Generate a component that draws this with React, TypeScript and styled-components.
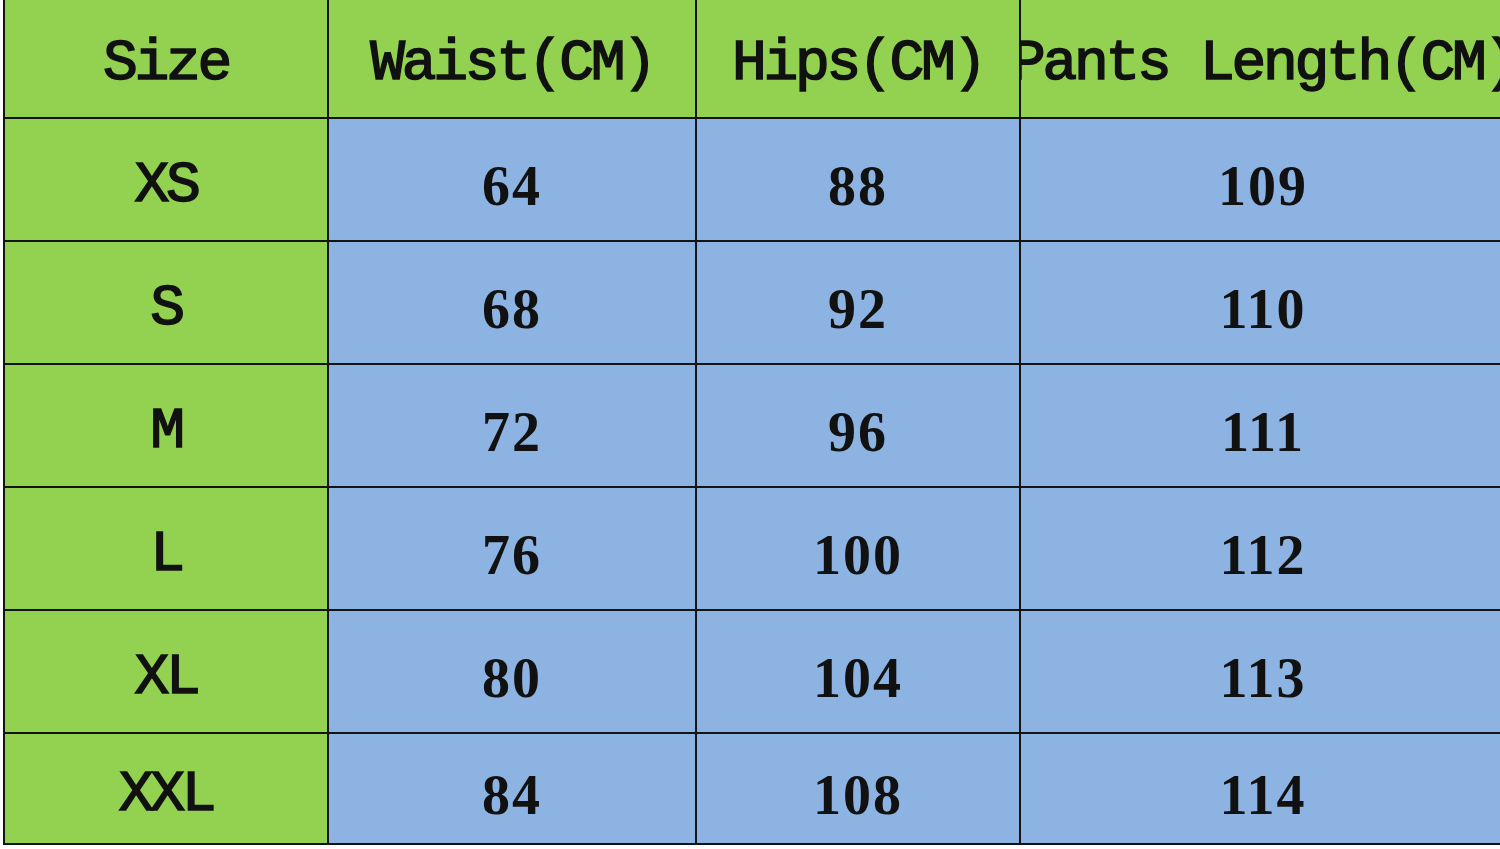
import React from 'react';
import styled, { createGlobalStyle } from 'styled-components';

const GlobalStyle = createGlobalStyle`
    html, body {
        margin: 0;
        padding: 0;
        background: #ffffff;
        overflow: hidden;
    }
`

const headers = ['Size', 'Waist(CM)', 'Hips(CM)', 'Pants Length(CM)']

const rows = [
    ['XS', '64', '88', '109'],
    ['S', '68', '92', '110'],
    ['M', '72', '96', '111'],
    ['L', '76', '100', '112'],
    ['XL', '80', '104', '113'],
    ['XXL', '84', '108', '114'],
]

const SizeChart = () => {
    return (
        <Page>
            <GlobalStyle />
            <Grid>
                {headers.map((title) => (
                    <Cell key={title} tone="green" head>
                        {title}
                    </Cell>
                ))}
                {rows.map((row) =>
                    row.map((value, index) => (
                        <Cell
                            key={row[0] + index}
                            tone={index === 0 ? 'green' : 'blue'}
                            numeric={index !== 0}
                        >
                            {value}
                        </Cell>
                    ))
                )}
            </Grid>
        </Page>
    )
}

// CSS styles
const Page = styled.div`
    width: 1500px;
    height: 849px;
    padding-left: 3px;
    box-sizing: border-box;
    overflow: hidden;
`

const Grid = styled.div`
    display: grid;
    grid-template-columns: 322px 366px 322px 484px;
    grid-template-rows: 117px repeat(5, 121px) 109px;
    gap: 2px;
    padding: 0 0 2px 2px;
    width: max-content;
    background: #141414;
`

const Cell = styled.div<{ tone: 'green' | 'blue'; head?: boolean; numeric?: boolean }>`
    display: flex;
    align-items: center;
    justify-content: center;
    overflow: hidden;
    white-space: pre;
    padding-top: ${(p) => (p.head ? '10px' : '12px')};
    box-sizing: border-box;
    background: ${(p) => (p.tone === 'green' ? '#93d251' : '#8db3e2')};
    color: #111111;
    font-family: ${(p) =>
        p.numeric
            ? '"Liberation Serif", "DejaVu Serif", serif'
            : '"Liberation Mono", "DejaVu Sans Mono", monospace'};
    font-weight: ${(p) => (p.numeric ? 700 : 400)};
    -webkit-text-stroke: ${(p) => (p.numeric ? '0' : '1.6px')} #111111;
    font-size: ${(p) => (p.numeric ? '56px' : '58px')};
    letter-spacing: ${(p) => (p.numeric ? '2px' : '-3.3px')};
    line-height: 1;
`

export default SizeChart;
